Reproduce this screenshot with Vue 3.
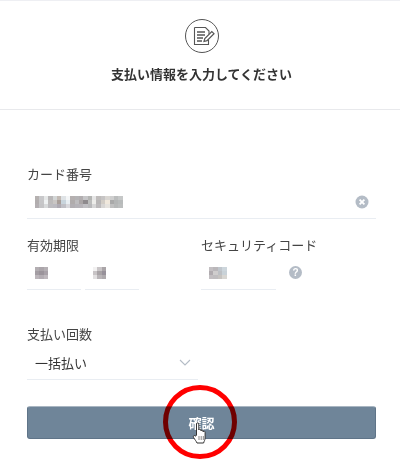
<script setup>
const rows = [
  ['#b5b1b0', '#c8c8ca', '#e6e8e8', '#b9b7b8', '#d3d6d6', '#c2bab4', '#dfe3e6', '#f4f6f7', '#b5b0b0', '#b4b3b5', '#b2aeb0', '#c6c6c8', '#b4b5b3', '#e6e6e6', '#bfbcbb', '#c6c4c4', '#d9d6d2', '#cfcfcf', '#bbbdbd', '#c6c8c8'],
  ['#b1adae', '#c6c6c8', '#eef1f2', '#bdbbbb', '#c9c6c4', '#a89e99', '#c8d4dc', '#e8eef2', '#b0acac', '#bdbcbe', '#aaa5a6', '#8e8a8d', '#bcbdbc', '#ecece9', '#b8b6b6', '#d2cdc6', '#f0e8dc', '#a9a9a9', '#b3b5b5', '#b8bbbb'],
  ['#b3afb2', '#c4c4c6', '#d8dadb', '#bdbcc0', '#bbbac0', '#aeaab2', '#c0c0c6', '#d8d8dc', '#b2afb3', '#b5b3b8', '#b6b3b8', '#c0bfc3', '#b8b8ba', '#d6d6d6', '#bcbabb', '#d8d6d4', '#e6e3de', '#c0c0c0', '#b6b8b8', '#bcbebe']
]
const month = [
  ['#b3aeb2', '#aba5aa', '#b5b0b4'],
  ['#a39da3', '#9b949b', '#a8a1a8'],
  ['#bcb6bb', '#b3adb3', '#bfb9be']
]
const year = [
  ['#f2f1f1', '#c9c5c7', '#aaa5a8'],
  ['#c8c4c6', '#a8a3a6', '#97919a'],
  ['#e2e0e1', '#b9b5b8', '#aeaaad']
]
const code = [
  ['#c3bfc2', '#bab7ba', '#c0c6cc', '#cdd6dc'],
  ['#b0abaf', '#cfcdcd', '#bdc0c4', '#c9d2d8'],
  ['#c2bec1', '#bfbdbf', '#c6c3c0', '#d8d6d2']
]
</script>

<template>
  <div class="page">
    <header class="head">
      <div class="head-icon">
        <svg width="36" height="36" viewBox="0 0 36 36" fill="none" stroke="#555" stroke-width="1">
          <circle cx="18" cy="18" r="16.5" />
          <path d="M10.5 9.5h11l3.5 3.5v3M10.5 9.5v17h14v-5" stroke-width="1.1" />
          <path d="M13 14h8M13 17h8M13 20h6M13 23h5" stroke-width="1.4" />
          <path d="M20 23.5l.8-3 7-7 2.2 2.2-7 7z" fill="#fff" stroke-width="1.2" />
        </svg>
      </div>
      <h1 class="title">支払い情報を入力してください</h1>
    </header>

    <form class="form" @submit.prevent>
      <div class="field">
        <label class="label">カード番号</label>
        <div class="input">
          <div class="mosaic">
            <div v-for="(row, i) in rows" :key="i" class="mosaic-row">
              <span v-for="(c, j) in row" :key="j" :style="{ background: c }"></span>
            </div>
          </div>
          <svg class="clear" width="14" height="14" viewBox="0 0 14 14">
            <circle cx="7" cy="7" r="6.5" fill="#b4bcc6" />
            <path d="M4.6 4.6l4.8 4.8M9.4 4.6l-4.8 4.8" stroke="#fff" stroke-width="1.8" />
          </svg>
        </div>
      </div>

      <div class="row">
        <div class="field expiry">
          <label class="label">有効期限</label>
          <div class="pair">
            <div class="input small">
              <div class="mosaic">
                <div v-for="(row, i) in month" :key="i" class="mosaic-row">
                  <span v-for="(c, j) in row" :key="j" :style="{ background: c }"></span>
                </div>
              </div>
            </div>
            <div class="input small">
              <div class="mosaic">
                <div v-for="(row, i) in year" :key="i" class="mosaic-row">
                  <span v-for="(c, j) in row" :key="j" :style="{ background: c }"></span>
                </div>
              </div>
            </div>
          </div>
        </div>
        <div class="field security">
          <label class="label">セキュリティコード</label>
          <div class="code-wrap">
            <div class="input code">
              <div class="mosaic">
                <div v-for="(row, i) in code" :key="i" class="mosaic-row">
                  <span v-for="(c, j) in row" :key="j" :style="{ background: c }"></span>
                </div>
              </div>
            </div>
            <span class="help">?</span>
          </div>
        </div>
      </div>

      <div class="field times">
        <label class="label">支払い回数</label>
        <div class="input select">
          <span>一括払い</span>
          <svg width="12" height="7" viewBox="0 0 12 7" fill="none">
            <path d="M1 1l5 5 5-5" stroke="#b4bcc6" stroke-width="1.1" />
          </svg>
        </div>
      </div>

      <div class="submit-wrap">
        <button class="submit" type="button">確認</button>
        <span class="ring"></span>
        <svg class="hand" width="16" height="24" viewBox="0 0 16 24">
          <path d="M4.5 14V3c0-1.6 2.300-1.600 2.300 0v6c0-1.300 2.200-1.300 2.200 0v1c0-1.200 2.100-1.200 2.100 0v1c0-1.100 2-1.100 2 .2V17c0 2-1 3-1.500 5H5c-.8-2-2-3-3.400-5.500-.9-1.800 1-2.800 2-1.300z" fill="#fff" stroke="#333" stroke-width="1" stroke-linejoin="round" />
          <path d="M7 15v4M9.200 15v4M11.300 15v4" stroke="#555" stroke-width=".7" />
        </svg>
      </div>
    </form>
  </div>
</template>

<style scoped>
.page {
  width: 400px;
  height: 465px;
  overflow: hidden;
  background: #fff;
  font-family: "Liberation Sans", "Noto Sans CJK JP", sans-serif;
  color: #333;
}
.head {
  height: 108px;
  border-top: 1px solid #eeeff3;
  border-bottom: 1px solid #e8e9ec;
  padding-top: 17px;
  box-sizing: content-box;
  height: 91px;
  text-align: center;
}
.head-icon {
  height: 36px;
  display: flex;
  justify-content: center;
  padding-left: 3px;
}
.title {
  margin: 11px 0 0;
  padding-left: 3px;
  font-size: 13px;
  line-height: 20px;
  font-weight: 700;
  color: #333;
}
.form {
  padding: 55px 24px 0 27px;
}
.label {
  display: block;
  font-size: 13px;
  line-height: 20px;
  color: #444;
}
.input {
  display: flex;
  align-items: center;
  height: 34px;
  padding-left: 8px;
  border-bottom: 1px solid #e9edf2;
  box-sizing: border-box;
}
.mosaic {
  display: flex;
  flex-direction: column;
}
.mosaic-row {
  display: flex;
  height: 4px;
}
.mosaic-row span {
  width: 4.4px;
  height: 4px;
}
.clear {
  margin-left: auto;
  margin-right: 7px;
}
.row {
  display: flex;
  margin-top: 17px;
}
.expiry {
  width: 174px;
}
.pair {
  display: flex;
  gap: 4px;
}
.small {
  width: 54px;
}
.code-wrap {
  display: flex;
  align-items: center;
}
.code {
  width: 75px;
}
.help {
  width: 13px;
  height: 13px;
  margin-left: 13px;
  margin-bottom: 2px;
  border-radius: 50%;
  background: #b4bcc6;
  color: #fff;
  font-size: 10px;
  font-weight: 700;
  line-height: 13px;
  text-align: center;
}
.times {
  margin-top: 35px;
}
.select {
  width: 171px;
  height: 35px;
  justify-content: space-between;
  padding-right: 7px;
  font-size: 13px;
  color: #333;
}
.submit-wrap {
  position: relative;
  margin-top: 26px;
}
.submit {
  display: block;
  width: 349px;
  height: 33px;
  padding: 0;
  border: 1px solid #5f7488;
  border-top-color: #a9b6c2;
  border-radius: 3px;
  background: #6f8599;
  color: #fff;
  font-family: inherit;
  font-size: 13px;
  font-weight: 700;
}
.ring {
  position: absolute;
  left: 136px;
  top: -21px;
  width: 74px;
  height: 74px;
  box-sizing: border-box;
  border: 5px solid #f00;
  border-radius: 50%;
  mix-blend-mode: multiply;
}
.hand {
  position: absolute;
  left: 165px;
  top: 15px;
}
</style>
